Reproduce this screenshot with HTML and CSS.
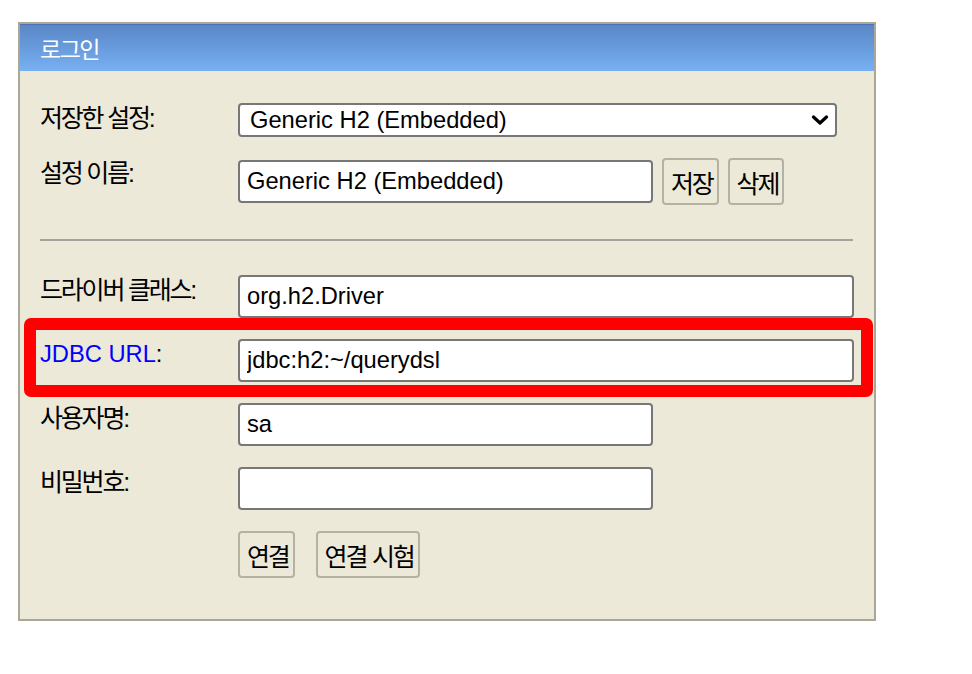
FILE: index.html
```html
<!DOCTYPE html>
<html lang="ko">
<head>
<meta charset="utf-8">
<title>로그인</title>
<link rel="stylesheet" href="styles.css">
</head>
<body>
<div class="panel">
  <div class="head"><span class="ko-head">로그인</span></div>
  <div class="body">
    <div class="form">
      <label class="lbl ko">저장한 설정:</label>
      <div class="select-wrap">
        <select class="sel"><option>Generic H2 (Embedded)</option></select>
        <svg class="chev" width="18" height="10" viewBox="0 0 18 10"><path d="M2.5 2 L9 8 L15.5 2" fill="none" stroke="#000" stroke-width="3.2" stroke-linecap="round" stroke-linejoin="round"/></svg>
      </div>

      <label class="lbl ko">설정 이름:</label>
      <div class="inline">
        <input class="inp short" type="text" value="Generic H2 (Embedded)">
        <button class="btn ko">저장</button>
        <button class="btn ko">삭제</button>
      </div>

      <div class="sep"></div>

      <label class="lbl ko">드라이버 클래스:</label>
      <input class="inp" type="text" value="org.h2.Driver">

      <label class="lbl"><a class="link">JDBC URL</a>:</label>
      <input class="inp" type="text" value="jdbc:h2:~/querydsl">

      <label class="lbl ko">사용자명:</label>
      <input class="inp short" type="text" value="sa">

      <label class="lbl ko">비밀번호:</label>
      <input class="inp short" type="password" value="">

      <div></div>
      <div class="actions">
        <button class="btn ko">연결</button>
        <button class="btn ko wide-space">연결 시험</button>
      </div>
    </div>
    <div class="highlight"></div>
  </div>
</div>
</body>
</html>
```

FILE: styles.css
```css
* { box-sizing: border-box; }

body {
  margin: 0;
  background: #ffffff;
  font-family: "Liberation Sans", "Noto Sans CJK KR", sans-serif;
  font-size: 23.7px;
  color: #000;
}

.panel {
  margin: 22px 0 0 18px;
  width: 858px;
  height: 599px;
  border: 2px solid #aba796;
  background: #ece9d8;
}

.head {
  height: 47px;
  padding-left: 20px;
  display: flex;
  align-items: center;
  background: linear-gradient(#5a86c6, #77b1f3);
  border-top: 1px solid #4a74b3;
  color: #fff;
}

.ko-head {
  font-size: 23px;
  letter-spacing: -1.5px;
}

.body {
  position: relative;
  padding: 32px 20px 0 20px;
}

.form {
  display: grid;
  grid-template-columns: 198px 1fr;
  row-gap: 21px;
  align-items: start;
}

.lbl {
  line-height: 28px;
  padding-top: 1px;
  white-space: nowrap;
}

.ko {
  font-size: 25px;
  letter-spacing: -2.2px;
}

.link { color: #0000ff; }

.select-wrap {
  position: relative;
  width: 599px;
}

.sel {
  appearance: none;
  -webkit-appearance: none;
  width: 599px;
  height: 34px;
  border: 2px solid #777;
  border-radius: 4px;
  background: #fff;
  padding: 0 30px 0 10px;
  font-family: "Liberation Sans", "Noto Sans CJK KR", sans-serif;
  font-size: 23.7px;
  color: #000;
  display: block;
}

.chev {
  position: absolute;
  right: 8px;
  top: 12px;
  pointer-events: none;
}

.inp {
  width: 616px;
  height: 43px;
  border: 2px solid #777;
  border-radius: 4px;
  background: #fff;
  padding: 0 7px;
  font-family: "Liberation Sans", "Noto Sans CJK KR", sans-serif;
  font-size: 23.7px;
  color: #000;
  outline: none;
}

.inp.short { width: 415px; }

.inline {
  display: flex;
  align-items: center;
  gap: 9px;
}

.btn {
  height: 47px;
  border: 2px solid #b5b2a3;
  border-radius: 4px;
  background: #ece9d8;
  padding: 0 4px 0 7px;
  font-family: "Liberation Sans", "Noto Sans CJK KR", sans-serif;
  color: #000;
}

.btn.wide-space { word-spacing: 1px; }

.actions {
  display: flex;
  gap: 21px;
}

.sep {
  grid-column: 1 / -1;
  height: 28px;
  padding-top: 13px;
  padding-right: 1px;
}

.sep::before {
  content: "";
  display: block;
  height: 2px;
  background: #a3a29b;
}

.highlight {
  position: absolute;
  left: 4px;
  top: 247px;
  width: 849px;
  height: 79px;
  border: 12px solid #ff0000;
  border-radius: 7px;
  pointer-events: none;
}
```
